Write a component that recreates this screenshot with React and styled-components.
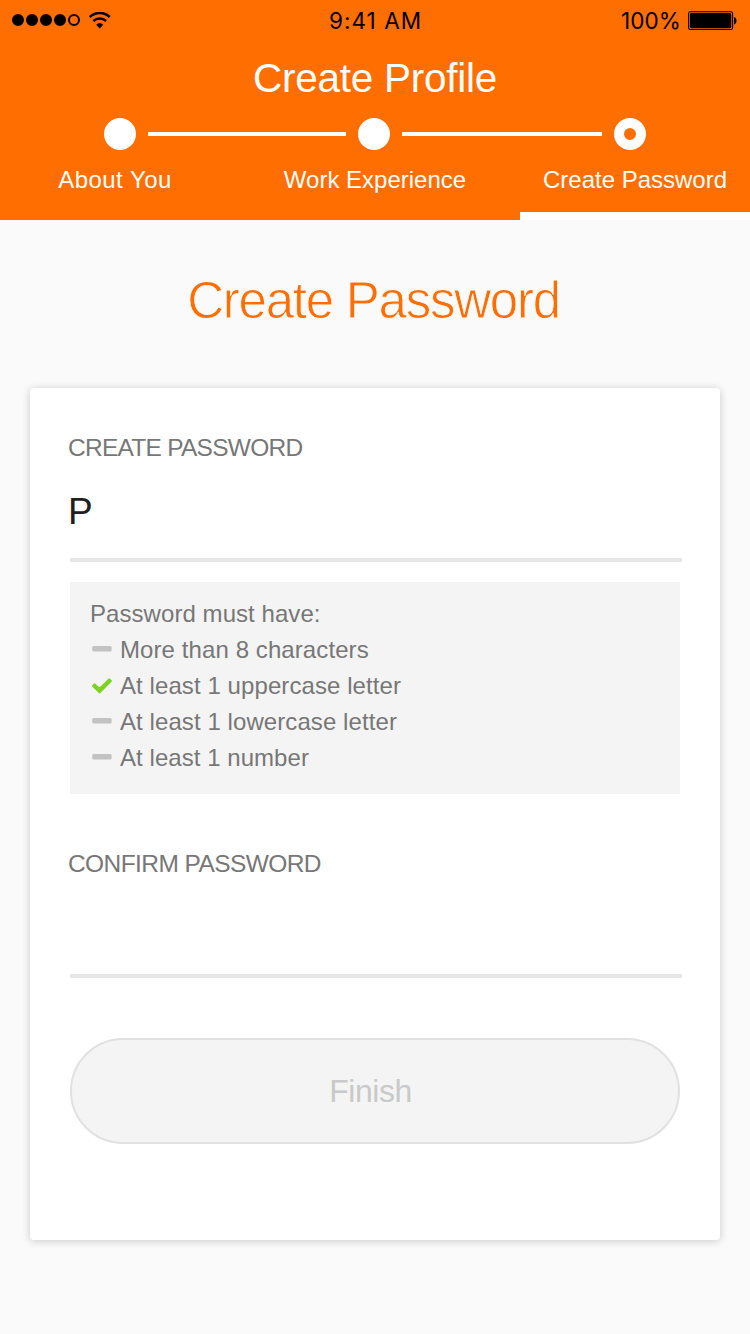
import React from "react";
import styled, { createGlobalStyle } from "styled-components";

const Global = createGlobalStyle`
  *, *::before, *::after { box-sizing: border-box; }
  body { margin: 0; background: #fafafa; }
`;

const Screen = styled.main`
  width: 750px;
  height: 1334px;
  overflow: hidden;
  background: #fafafa;
  font-family: "Liberation Sans", Arial, sans-serif;
`;

const Header = styled.header`
  display: flex;
  flex-direction: column;
  height: 220px;
  background: #ff6e00;
  color: #fff;
`;

const StatusBar = styled.div`
  display: grid;
  grid-template-columns: 1fr auto 1fr;
  align-items: center;
  height: 40px;
  padding: 0 13px 0 12px;
  color: #000;
  font: 400 22.5px/38px Inter, sans-serif;
`;

const Signal = styled.div`
  display: flex;
  align-items: center;
  gap: 2px;
`;

const SignalDot = styled.span`
  width: 12px;
  height: 12px;
  border: 2px solid #000;
  border-radius: 50%;
  background: ${(p) => (p.$on ? "#000" : "transparent")};
`;

const WifiIcon = styled.svg`
  margin-left: 7px;
`;

const Clock = styled.span`
  padding: 2px 0 0 2px;
  letter-spacing: 1.05px;
`;

const Power = styled.div`
  display: flex;
  align-items: center;
  justify-content: flex-end;
  gap: 7px;
`;

const Charge = styled.span`
  padding-top: 2px;
  letter-spacing: 0.1px;
`;

const Title = styled.h1`
  margin: 18px 0 0;
  font-size: 40.5px;
  font-weight: 400;
  line-height: 40px;
  letter-spacing: -0.25px;
  text-align: center;
`;

const Tracker = styled.div`
  display: flex;
  align-items: center;
  gap: 12px;
  margin-top: 20px;
  padding-left: 104px;
`;

const TrackerDot = styled.span`
  width: 32px;
  height: 32px;
  border: ${(p) => (p.$current ? 10 : 16)}px solid #fff;
  border-radius: 50%;
`;

const TrackerLine = styled.span`
  width: ${(p) => p.$width}px;
  height: 4px;
  background: #fff;
`;

const Tabs = styled.nav`
  display: grid;
  grid-template-columns: 230px 290px 230px;
  flex: 1;
`;

const Tab = styled.span`
  padding-top: 16px;
  border-bottom: 8px solid ${(p) => (p.$active ? "#fff" : "transparent")};
  font-size: 24px;
  line-height: 28px;
  letter-spacing: ${(p) => p.$tracking || 0}px;
  text-align: center;
  white-space: nowrap;
`;

const Heading = styled.h2`
  margin: 51px 0 57px;
  padding-right: 3px;
  color: #ff6e00;
  font-size: 51px;
  font-weight: 400;
  line-height: 60px;
  letter-spacing: -1.24px;
  text-align: center;
  -webkit-text-stroke: 0.8px #fafafa;
`;

const Card = styled.form`
  display: flex;
  flex-direction: column;
  width: 690px;
  height: 852px;
  margin: 0 auto;
  padding: 46px 38px 0 40px;
  border-radius: 4px;
  background: #fff;
  box-shadow: 0 1px 8px rgba(0, 0, 0, 0.2);
`;

const Field = styled.div`
  display: flex;
  flex-direction: column;
  height: 128px;
  border-bottom: 4px solid #e6e6e6;
`;

const Label = styled.label`
  margin-left: -2px;
  color: #777;
  font-size: 24.5px;
  line-height: 28px;
  letter-spacing: ${(p) => p.$tracking}px;
`;

const Value = styled.div`
  margin: 28px 0 0 -2px;
  color: #1f1f1f;
  font-size: 37px;
  line-height: 44px;
`;

const Rules = styled.section`
  width: 610px;
  height: 212px;
  margin: 20px 0 56px;
  padding: 14px 20px 0;
  background: #f4f4f4;
  color: #777;
  font-size: 24px;
  line-height: 36px;
`;

const RulesTitle = styled.p`
  margin: 0;
  letter-spacing: 0.06px;
`;

const RuleList = styled.ul`
  margin: 0;
  padding: 0;
  list-style: none;
`;

const Rule = styled.li`
  display: flex;
  letter-spacing: ${(p) => p.$tracking}px;
`;

const RuleIcon = styled.svg`
  flex: none;
  margin-right: 6px;
`;

const Finish = styled.button`
  width: 610px;
  height: 106px;
  margin-top: 60px;
  padding: 0 9px 0 0;
  border: 2px solid #e1e1e1;
  border-radius: 53px;
  background: #f4f4f4;
  color: #c9c9c9;
  font: 400 32px/38px "Liberation Sans", Arial, sans-serif;
  letter-spacing: -0.5px;
`;

const rules = [
  { text: "More than 8 characters", tracking: 0.09 },
  { text: "At least 1 uppercase letter", tracking: 0.08, met: true },
  { text: "At least 1 lowercase letter", tracking: 0.08 },
  { text: "At least 1 number", tracking: 0.05 },
];

function RuleMark({ met }) {
  return (
    <RuleIcon width="24" height="36" viewBox="0 0 24 36">
      {met ? (
        <path
          d="M2.7 18 L4.6 16 L9.5 20.6 L19.2 11.1 L21.2 13 L9.6 24.7 Z"
          fill="#7ed321"
          stroke="#7ed321"
          strokeWidth="1.6"
          strokeLinejoin="round"
        />
      ) : (
        <rect x="2.2" y="14" width="19.4" height="5.4" rx="1.5" fill="#c2c2c2" />
      )}
    </RuleIcon>
  );
}

export default function App() {
  return (
    <Screen>
      <Global />
      <Header>
        <StatusBar>
          <Signal>
            {[1, 1, 1, 1, 0].map((on, i) => (
              <SignalDot key={i} $on={on} />
            ))}
            <WifiIcon width="22" height="17" viewBox="0 0 22 17">
              <g fill="none" stroke="#000" strokeWidth="2.5">
                <path d="M0.7 5 A14.2 14.2 0 0 1 20.7 5" />
                <path d="M4.3 9 A9.6 9.6 0 0 1 17.1 9" />
              </g>
              <path d="M7.2 12.7 Q10.7 9.4 14.2 12.7 L10.7 16.4 Z" />
            </WifiIcon>
          </Signal>
          <Clock>9:41 AM</Clock>
          <Power>
            <Charge>100%</Charge>
            <svg width="49" height="20" viewBox="0 0 49 20">
              <rect x="0.6" y="1.8" width="44" height="17.7" rx="1.8" fill="none" stroke="#000" strokeWidth="1.1" />
              <rect x="1.9" y="3.1" width="41.4" height="15.1" rx="1.4" />
              <path d="M46 7 C49.4 7.8 49.4 13.8 46 14.6 Z" />
            </svg>
          </Power>
        </StatusBar>
        <Title>Create Profile</Title>
        <Tracker>
          <TrackerDot />
          <TrackerLine $width={198} />
          <TrackerDot />
          <TrackerLine $width={200} />
          <TrackerDot $current />
        </Tracker>
        <Tabs>
          <Tab $tracking={0.45}>About You</Tab>
          <Tab>Work Experience</Tab>
          <Tab $active>Create Password</Tab>
        </Tabs>
      </Header>
      <Heading>Create Password</Heading>
      <Card>
        <Field>
          <Label $tracking={-0.74}>CREATE PASSWORD</Label>
          <Value>P</Value>
        </Field>
        <Rules>
          <RulesTitle>Password must have:</RulesTitle>
          <RuleList>
            {rules.map((r) => (
              <Rule key={r.text} $tracking={r.tracking}>
                <RuleMark met={r.met} />
                {r.text}
              </Rule>
            ))}
          </RuleList>
        </Rules>
        <Field>
          <Label $tracking={-0.58}>CONFIRM PASSWORD</Label>
        </Field>
        <Finish type="button" disabled>
          Finish
        </Finish>
      </Card>
    </Screen>
  );
}
